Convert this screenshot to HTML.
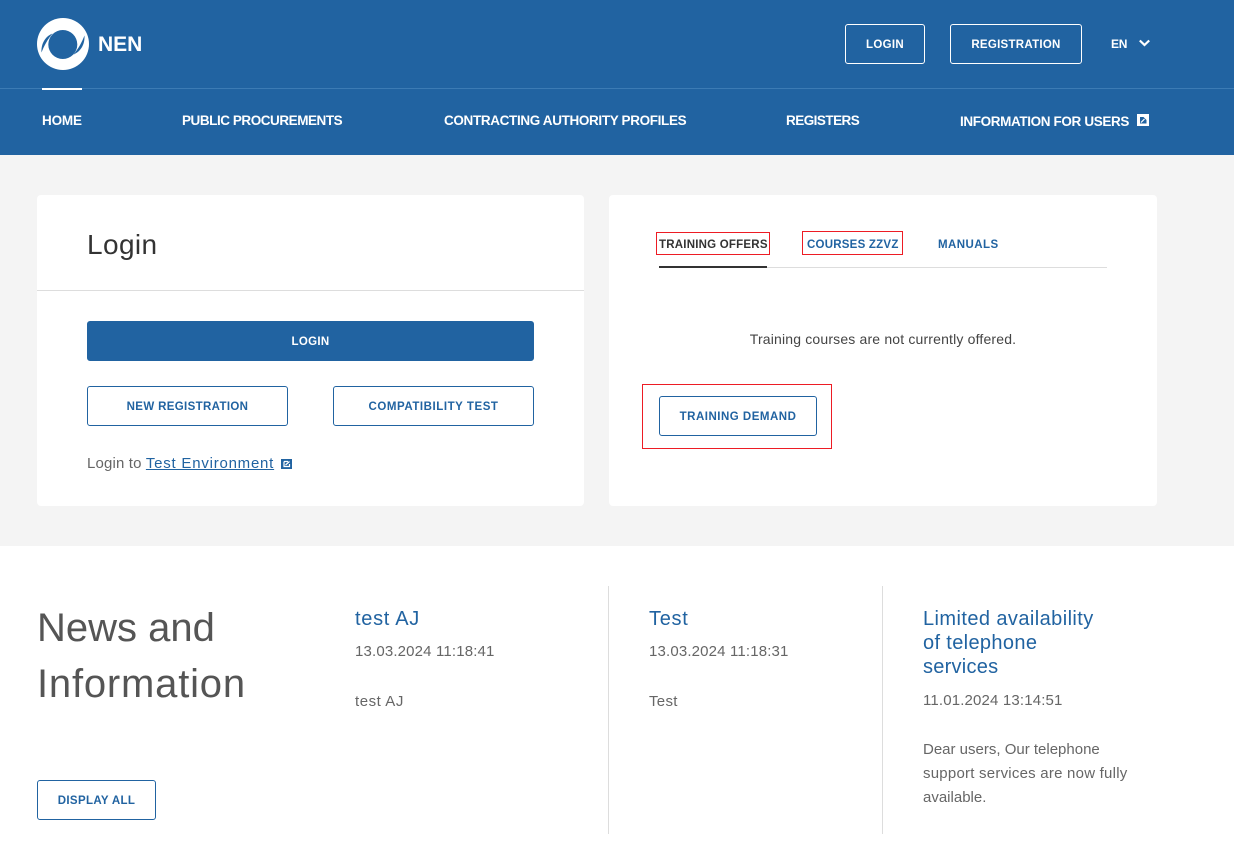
<!DOCTYPE html>
<html lang="en">
<head>
<meta charset="utf-8">
<title>NEN</title>
<style>
html,body{margin:0;padding:0;background:#fff}
body{position:relative;width:1234px;height:860px;overflow:hidden;font-family:"Liberation Sans",sans-serif;color:#666}
.a{position:absolute;white-space:nowrap}
.t{position:absolute;white-space:nowrap;line-height:24px;height:24px}
.nav{font-size:13.5px;font-weight:bold;color:#fff}
.btn{position:absolute;box-sizing:border-box;border:1px solid #2163a1;border-radius:3px;background:#fff;color:#2163a1;font-size:11.5px;font-weight:bold;text-align:center;height:40px;line-height:40px;white-space:nowrap}
.hb{background:transparent;border-color:#fff;color:#fff}
.tab{font-size:11.500px;font-weight:bold;color:#2163a1}
.red{position:absolute;box-sizing:border-box;border:1px solid #ed1c24}
.card{position:absolute;background:#fff;border-radius:4px;height:311px;top:195px}
.ttl{font-size:20px;color:#2163a1}
.txt{font-size:15px;color:#666}
a{color:#2163a1}
</style>
</head>
<body>
<div class="a" style="left:0;top:0;width:1234px;height:155px;background:#2163a1"></div>
<div class="a" style="left:0;top:88px;width:1234px;height:1px;background:#3c7bb4"></div>
<div class="a" style="left:42px;top:88px;width:40px;height:2px;background:#fff"></div>

<svg class="a" style="left:0;top:0" width="100" height="88" viewBox="0 0 100 88">
<circle cx="63" cy="44" r="26" fill="#fff"/>
<circle cx="62.800" cy="44.500" r="14.500" fill="#2163a1"/>
<path d="M52.500 33.500C45 36.500 41 44 41.500 52.500C44 46 47.500 39.500 52.500 33.500Z" fill="#2163a1"/>
<path d="M73.500 54.500C81 51.500 85 44 84.500 35.500C82 42 78.500 48.500 73.500 54.500Z" fill="#2163a1"/>
</svg>
<div class="t" style="left:98px;top:33px;font-size:21px;font-weight:bold;color:#fff">NEN</div>

<div class="btn hb" style="left:845px;top:24px;width:80px;letter-spacing:.3px">LOGIN</div>
<div class="btn hb" style="left:950px;top:24px;width:132px;letter-spacing:.27px">REGISTRATION</div>
<div class="t" style="left:1111px;top:32px;font-size:12px;font-weight:bold;color:#fff;letter-spacing:-.2px">EN</div>
<svg class="a" style="left:1138px;top:38px" width="13" height="11" viewBox="0 0 13 11"><path d="M1.800 2.500L6.500 7L11.200 2.500" fill="none" stroke="#fff" stroke-width="2.200"/></svg>

<div class="t nav" style="left:42px;top:109px;letter-spacing:-.18px">HOME</div>
<div class="t nav" style="left:182px;top:109px;letter-spacing:-.45px">PUBLIC PROCUREMENTS</div>
<div class="t nav" style="left:444px;top:109px;letter-spacing:-.35px">CONTRACTING AUTHORITY PROFILES</div>
<div class="t nav" style="left:786px;top:109px;letter-spacing:-.53px">REGISTERS</div>
<div class="t nav" style="left:960px;top:110px;letter-spacing:-.37px">INFORMATION FOR USERS</div>
<svg class="a" style="left:1137px;top:114px" width="12" height="12" viewBox="0 0 12 12"><rect width="12" height="12" fill="#fff"/><rect x="3" y="3" width="6.500" height="6.500" fill="#2163a1"/><path d="M6.500 3H9.500V6Z" fill="#fff"/><path d="M4 8.500L7.500 5" fill="none" stroke="#fff" stroke-width="1.200"/></svg>

<div class="a" style="left:0;top:155px;width:1234px;height:391px;background:#f4f4f4"></div>

<div class="card" style="left:37px;width:547px"></div>
<div class="t" style="left:87px;top:233px;font-size:28px;color:#333;letter-spacing:.4px">Login</div>
<div class="a" style="left:37px;top:290px;width:547px;height:1px;background:#ddd"></div>
<div class="btn" style="left:87px;top:321px;width:447px;background:#2163a1;color:#fff;letter-spacing:.3px">LOGIN</div>
<div class="btn" style="left:87px;top:386px;width:201px;letter-spacing:.35px">NEW REGISTRATION</div>
<div class="btn" style="left:333px;top:386px;width:201px;letter-spacing:.55px">COMPATIBILITY TEST</div>
<div class="t txt" style="left:87px;top:452px;letter-spacing:.15px">Login to <a href="#" style="letter-spacing:.77px">Test Environment</a></div>
<svg class="a" style="left:281px;top:459px" width="11" height="10" viewBox="0 0 11 10"><rect width="11" height="10" fill="#2163a1"/><path d="M3 2.500H7M3 2.500V7.500H8.500V5M4.500 6L8.500 2.500" fill="none" stroke="#fff" stroke-width="1.200"/></svg>

<div class="card" style="left:609px;width:548px"></div>
<div class="t tab" style="left:659px;top:233px;color:#333;letter-spacing:.22px">TRAINING OFFERS</div>
<div class="t tab" style="left:807px;top:233px;letter-spacing:.23px">COURSES ZZVZ</div>
<div class="t tab" style="left:938px;top:233px;letter-spacing:.45px">MANUALS</div>
<div class="a" style="left:659px;top:267px;width:448px;height:1px;background:#ddd"></div>
<div class="a" style="left:659px;top:266px;width:108px;height:2px;background:#333"></div>
<div class="red" style="left:656px;top:232px;width:114px;height:23px"></div>
<div class="red" style="left:802px;top:231px;width:101px;height:24px"></div>
<div class="t" style="left:609px;top:327px;width:548px;text-align:center;font-size:14px;color:#444;letter-spacing:.17px">Training courses are not currently offered.</div>
<div class="btn" style="left:659px;top:396px;width:158px;letter-spacing:.5px">TRAINING DEMAND</div>
<div class="red" style="left:642px;top:384px;width:190px;height:65px"></div>

<div class="a" style="left:37px;top:600px;font-size:40px;line-height:56px;color:#555">News and<br><span style="letter-spacing:.8px">Information</span></div>
<div class="btn" style="left:37px;top:780px;width:119px;letter-spacing:.35px">DISPLAY ALL</div>

<div class="a" style="left:608px;top:586px;width:1px;height:248px;background:#ddd"></div>
<div class="a" style="left:882px;top:586px;width:1px;height:248px;background:#ddd"></div>

<div class="t ttl" style="left:355px;top:607px;letter-spacing:.7px">test AJ</div>
<div class="t txt" style="left:355px;top:640px;letter-spacing:.16px">13.03.2024 11:18:41</div>
<div class="t txt" style="left:355px;top:690px;letter-spacing:.55px">test AJ</div>

<div class="t ttl" style="left:649px;top:607px;letter-spacing:.7px">Test</div>
<div class="t txt" style="left:649px;top:640px;letter-spacing:.16px">13.03.2024 11:18:31</div>
<div class="t txt" style="left:649px;top:690px;letter-spacing:.3px">Test</div>

<div class="t ttl" style="left:923px;top:607px;letter-spacing:.42px">Limited availability</div>
<div class="t ttl" style="left:923px;top:631px;letter-spacing:.35px">of telephone</div>
<div class="t ttl" style="left:923px;top:655px;letter-spacing:.25px">services</div>
<div class="t txt" style="left:923px;top:689px;letter-spacing:.16px">11.01.2024 13:14:51</div>
<div class="t txt" style="left:923px;top:738px">Dear users, Our telephone</div>
<div class="t txt" style="left:923px;top:762px;letter-spacing:.23px">support services are now fully</div>
<div class="t txt" style="left:923px;top:786px">available.</div>
</body>
</html>
